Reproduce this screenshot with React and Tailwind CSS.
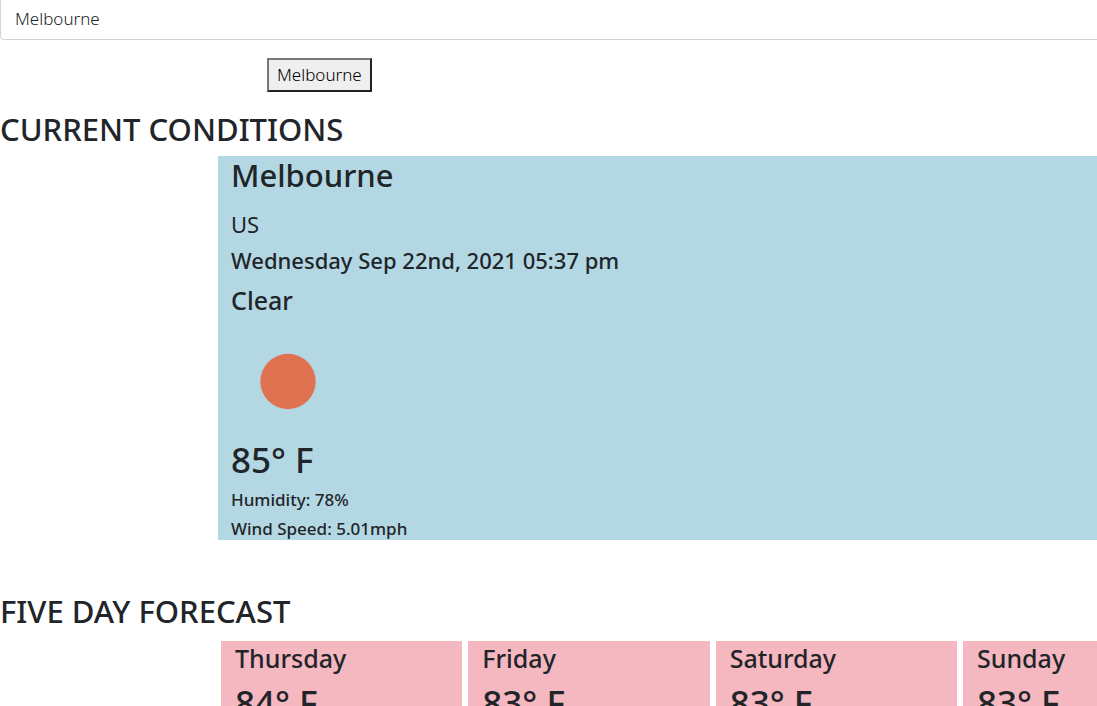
const days = [
  { name: "Thursday", temp: "84° F" },
  { name: "Friday", temp: "83° F" },
  { name: "Saturday", temp: "83° F" },
  { name: "Sunday", temp: "83° F" },
];

export default function App() {
  return (
    <div className="h-screen overflow-hidden bg-white font-['Noto_Sans','Open_Sans',sans-serif] text-[#212529]">
      <input
        aria-label="City"
        defaultValue="Melbourne"
        className="-mt-1 -mr-4 block h-11 w-[calc(100%+16px)] rounded border border-[#ced4da] bg-white px-3.5 text-[17px] font-light outline-none"
      />
      <div className="mt-[18px] pl-[267px]">
        <button className="block h-[34px] border-2 border-t-[#767676] border-r-[#212121] border-b-[#212121] border-l-[#767676] bg-[#efefef] px-2 text-[17px] leading-7 font-light text-black">
          Melbourne
        </button>
      </div>
      <h2 className="mt-[18px] mb-2 text-[31px] leading-[38px] font-medium">CURRENT CONDITIONS</h2>
      <section className="ml-[218px] bg-[#b4d8e3] pl-[13px] font-medium">
        <h2 className="text-[31px] leading-[38px]">Melbourne</h2>
        <h4 className="mt-4 text-[22px] leading-7 font-normal">US</h4>
        <h4 className="mt-2 text-[22px] leading-7">Wednesday Sep 22nd, 2021 05:37 pm</h4>
        <h3 className="mt-2.5 text-[25px] leading-8">Clear</h3>
        <svg className="mt-2 block size-28" viewBox="0 0 112 112" role="img" aria-label="Clear sky">
          <circle cx="57" cy="57.5" r="27.7" fill="#df7250" />
        </svg>
        <h1 className="mt-0.5 text-[35px] leading-11">85° F</h1>
        <h5 className="mt-2 text-[17px] leading-5">Humidity: 78%</h5>
        <h5 className="mt-2 text-[17px] leading-[22px]">Wind Speed: 5.01mph</h5>
      </section>
      <h2 className="mt-[52px] mb-[11px] text-[31px] leading-[38px] font-medium">FIVE DAY FORECAST</h2>
      <div className="ml-[221px] flex gap-1.5">
        {days.map((d) => (
          <article key={d.name} className="h-72 w-[22vw] shrink-0 bg-[#f5b7c0] pl-3.5 font-medium">
            <h3 className="text-[25px] leading-[34px]">{d.name}</h3>
            <h2 className="mt-2 text-[35px] leading-10">{d.temp}</h2>
          </article>
        ))}
      </div>
    </div>
  );
}
